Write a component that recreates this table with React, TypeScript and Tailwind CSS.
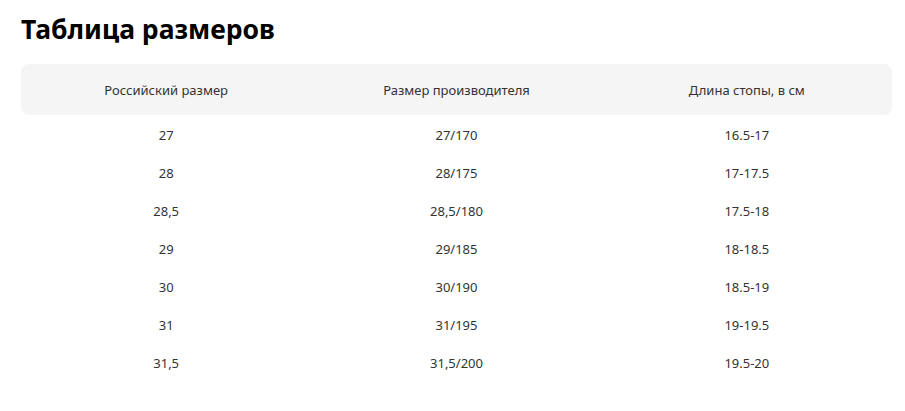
import React from 'react'

const rows = [
    ['27', '27/170', '16.5-17'],
    ['28', '28/175', '17-17.5'],
    ['28,5', '28,5/180', '17.5-18'],
    ['29', '29/185', '18-18.5'],
    ['30', '30/190', '18.5-19'],
    ['31', '31/195', '19-19.5'],
    ['31,5', '31,5/200', '19.5-20'],
]

const App = () => {
    return (
        <div className="bg-white min-h-screen px-[21px] pt-[11px] font-['Noto_Sans',sans-serif] text-[#222]">
            <h1 className="text-[26.5px] font-bold leading-[36px] text-black mb-[17px]">Таблица размеров</h1>

            <div className="w-[871px]">
                {/* Header */}
                <div className="grid grid-cols-3 h-[51px] pt-[2px] items-center bg-[#f5f5f5] rounded-lg text-[13px] text-[#333] text-center">
                    <div>Российский размер</div>
                    <div>Размер производителя</div>
                    <div>Длина стопы, в см</div>
                </div>

                {/* Rows */}
                {rows.map((row, index) => (
                    <div key={index} className="grid grid-cols-3 h-[38px] pt-[4px] items-center text-[13px] text-[#333] text-center">
                        {row.map((cell, i) => (
                            <div key={i}>{cell}</div>
                        ))}
                    </div>
                ))}
            </div>
        </div>
    )
}

export default App
